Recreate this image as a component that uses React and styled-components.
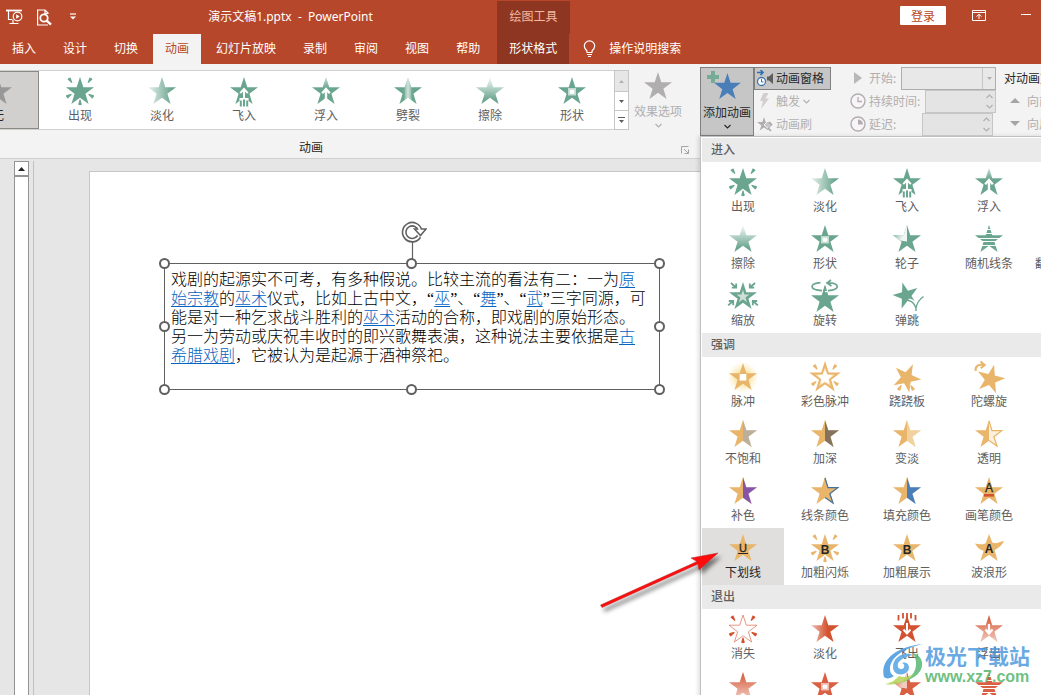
import React from "react";
import styled, { createGlobalStyle, css } from "styled-components";

const GlobalStyle = createGlobalStyle`
  * {
    box-sizing: border-box;
  }

  body {
    margin: 0;
    font-family: "Noto Sans CJK SC", sans-serif;
    font-size: 12px;
    line-height: 16px;
    color: #262626;
  }

  button, input, select {
    font: inherit;
    color: inherit;
    margin: 0;
  }
`;

const Page = styled.div`
  position: relative;
  display: flex;
  flex-direction: column;
  height: 100vh;
  overflow: hidden;
  background: #e6e6e6;
`;

// Title bar
const Header = styled.header`
  background: #b7472a;
  color: #ffffff;
`;

const TitleBar = styled.div`
  display: flex;
  height: 34px;
`;

const TitleLeft = styled.div`
  flex: 0 0 497px;
  display: flex;
  align-items: center;
`;

const QuickAccess = styled.div`
  display: flex;
  align-items: center;
  gap: 14px;
  padding-left: 6px;
`;

const IconButton = styled.button`
  display: flex;
  padding: 0;
  border: none;
  background: none;
`;

const Title = styled.div`
  flex: 1;
  padding-right: 12px;
  text-align: center;
  white-space: pre;
  font-family: "Noto Sans", "Noto Sans CJK SC", sans-serif;
`;

const ContextLabel = styled.div`
  width: 73px;
  margin-top: 1px;
  padding-top: 7px;
  text-align: center;
  background: #8e3621;
  color: #f5b8a2;
`;

const WindowControls = styled.div`
  display: flex;
  align-items: flex-start;
  gap: 26px;
  margin-left: auto;
  padding: 6px 10px 0 0;
`;

const SignIn = styled.button`
  width: 46px;
  height: 19px;
  padding: 0;
  border: none;
  border-radius: 1px;
  background: #ffffff;
  color: #b7472a;
  line-height: 19px;
`;

const WindowButtons = styled.div`
  display: flex;
  gap: 35px;
  padding-top: 4px;
`;

const Tabs = styled.nav`
  display: flex;
  gap: 3px;
  height: 30px;
`;

const Tab = styled.button`
  padding: 0 12px 2px;
  border: none;
  background: ${({ $active, $context }) => ($active ? "#f3f3f3" : $context ? "#8e3621" : "none")};
  color: ${({ $active }) => ($active ? "#b7472a" : "#ffffff")};
  margin-left: ${({ $context }) => ($context ? "2px" : "0")};
`;

const TellMe = styled.button`
  display: flex;
  align-items: center;
  gap: 11px;
  margin-left: 9px;
  padding: 0 0 2px;
  border: none;
  background: none;
`;

// Ribbon
const Ribbon = styled.div`
  position: relative;
  z-index: 2;
  display: flex;
  height: 95px;
  flex-shrink: 0;
  background: #f3f3f3;
  border-bottom: 1px solid #d0d0d0;
`;

const AnimationGroup = styled.section`
  flex: 0 0 692px;
  display: flex;
  flex-direction: column;
  padding-top: 6px;
`;

const GroupRow = styled.div`
  display: flex;
`;

const Gallery = styled.div`
  flex: 0 0 614px;
  display: flex;
  justify-content: flex-end;
  overflow: hidden;
  height: 60px;
  padding-right: 1px;
  border: solid #d0d0d0;
  border-width: 1px 0;
  background: #ffffff;
`;

const GalleryScroll = styled.div`
  width: 15px;
  display: grid;
  grid-template-rows: 22px 19px 19px;
`;

const ScrollStep = styled.button`
  display: flex;
  align-items: center;
  justify-content: center;
  padding: 0;
  border: 1px solid #c6c6c6;
  background: ${({ disabled }) => (disabled ? "#e6e6e6" : "#ffffff")};

  & + & {
    border-top: none;
  }
`;

const Effect = styled.button`
  flex: 0 0 82px;
  height: ${({ $inMenu }) => ($inMenu ? "57px" : "58px")};
  display: flex;
  flex-direction: column;
  align-items: center;
  gap: 2px;
  padding: 6px 0 0;
  border: none;
  background: none;
  color: #5e5e5e;
  white-space: nowrap;

  ${({ $selected }) => $selected && css`
    background: #d2d0ce;
    box-shadow: inset 0 0 0 1px #8a8a85;
    color: #262626;
  `}

  ${({ $hot }) => $hot && css`
    background: #e1dfdd;
    color: #262626;
  `}
`;

const EffectIcon = styled.svg`
  width: 28px;
  height: 28px;
  flex-shrink: 0;
  overflow: visible;
`;

const EffectOptions = styled.button`
  display: flex;
  flex-direction: column;
  align-items: center;
  padding: 2px 0 0 5px;
  border: none;
  background: none;
  color: #b1aeb0;
  white-space: nowrap;
`;

const ButtonText = styled.span`
  margin: 3px 0 4px;
`;

const GroupCaption = styled.div`
  display: flex;
  align-items: flex-end;
  height: 25px;
  padding-right: 3px;
`;

const CaptionText = styled.div`
  flex: 1;
  padding-left: 8px;
  margin-right: 67px;
  text-align: center;
`;

const Divider = styled.div`
  width: 1px;
  height: ${({ $short }) => ($short ? "56px" : "86px")};
  margin-top: ${({ $short }) => ($short ? "10px" : "4px")};
  background: ${({ $short }) => ($short ? "#d0d0d0" : "#b1b1b1")};
`;

const AdvancedGroup = styled.section`
  display: flex;
  align-items: flex-start;
  padding: 3px 7px 0 8px;
`;

const MenuAnchor = styled.div`
  position: relative;
`;

const AddAnimation = styled.button`
  width: 54px;
  height: 69px;
  display: flex;
  flex-direction: column;
  align-items: center;
  padding: 5px 0 0;
  border: 1px solid #808080;
  background: #c6c6c6;
  white-space: nowrap;
`;

const ToolColumn = styled.div`
  width: 77px;
  display: grid;
  grid-auto-rows: 23px;
`;

const ToolButton = styled.button`
  display: flex;
  align-items: center;
  gap: 3px;
  padding: 0 2px 1px;
  border: 1px solid ${({ $pressed }) => ($pressed ? "#808080" : "transparent")};
  background: ${({ $pressed }) => ($pressed ? "#c6c6c6" : "none")};
  color: ${({ $pressed }) => ($pressed ? "#262626" : "#b1b1b1")};
  white-space: nowrap;
`;

const TimingGroup = styled.section`
  display: grid;
  grid-auto-rows: 23px;
  padding: 3px 4px 0 12px;
`;

const TimingRow = styled.div`
  display: flex;
  align-items: center;
  color: #b1aeb0;
`;

const TimingLabel = styled.label`
  display: flex;
  align-items: center;
  gap: 3px;
  width: ${({ $width }) => $width};
  padding-bottom: 2px;
  white-space: nowrap;
`;

const Field = styled.div`
  position: relative;
  width: ${({ $wide }) => ($wide ? "95px" : "71px")};
  height: 23px;
`;

const fieldStyle = css`
  width: 100%;
  height: 100%;
  padding: 0 4px;
  border-radius: 0;
  background: #e4e4e4;
`;

const StartSelect = styled.select`
  ${fieldStyle}
  appearance: none;
  border: 1px solid #919191;
`;

const TimeInput = styled.input`
  ${fieldStyle}
  border: 1px solid #c6c6c6;
`;

const FieldMarks = styled.span`
  position: absolute;
  inset: 1px 1px 1px auto;
  width: 13px;
  display: flex;
  flex-direction: column;
  align-items: center;
  justify-content: center;
  gap: 5px;
  border-left: 1px solid ${({ $line }) => ($line ? "#c6c6c6" : "transparent")};
  pointer-events: none;
`;

const ReorderGroup = styled.section`
  display: grid;
  grid-auto-rows: 23px;
  padding: 2px 0 0 4px;
  line-height: 23px;
  white-space: nowrap;
`;

const MoveButton = styled.button`
  display: flex;
  align-items: center;
  gap: 7px;
  padding: 0 0 0 6px;
  border: none;
  background: none;
  color: #b1aeb0;
`;

// Add animation menu
const Menu = styled.div`
  position: absolute;
  top: 100%;
  left: 0;
  padding: 1px 0 0 1px;
  border: solid #c0c0c0;
  border-width: 1px 0 0 1px;
  background: #ffffff;
  box-shadow: -2px 0 4px rgba(0, 0, 0, 0.12);
`;

const MenuHeading = styled.h3`
  margin: 0;
  padding: 3px 9px 5px;
  background: #eaeaea;
  color: #5e5e5e;
  font-size: 12px;
  line-height: 16px;
  font-weight: 500;
`;

const MenuRow = styled.div`
  display: flex;
  min-width: 410px;
`;

// Work area
const Workspace = styled.main`
  flex: 1;
  display: flex;
  min-height: 0;
  padding-top: 2px;
`;

const OutlineScroll = styled.div`
  width: 15px;
  margin-left: 14px;
  display: flex;
  flex-direction: column;
  border: 1px solid #939393;
  border-bottom: none;
  background: #ffffff;
`;

const ScrollUp = styled.button`
  height: 15px;
  display: flex;
  align-items: center;
  justify-content: center;
  padding: 0;
  border: none;
  border-bottom: 2px solid #939393;
  background: none;
`;

const PaneEdge = styled.div`
  width: 1px;
  margin-left: 4px;
  background: #c0c0c0;
`;

const Slide = styled.article`
  position: relative;
  flex: 1;
  margin: 10px 0 0 55px;
  border: solid #c6c6c6;
  border-width: 1px 0 0 1px;
  background: #ffffff;
`;

const TextBox = styled.div`
  position: absolute;
  top: 91px;
  left: 74px;
  width: 496px;
  height: 127px;
  padding: 6px 0 0 6px;
  border: 1px solid #606060;
  color: #000000;
  font-family: "Liberation Serif", "Noto Sans CJK SC", sans-serif;
  font-size: 16px;
  line-height: 19px;
  font-weight: 300;
`;

const Paragraph = styled.p`
  margin: 0;
  white-space: nowrap;

  a {
    color: #0563c1;
    text-underline-offset: 2px;
  }
`;

const Handle = styled.span`
  position: absolute;
  left: ${({ $x }) => $x};
  top: ${({ $y }) => $y};
  width: 11px;
  height: 11px;
  margin: -6px 0 0 -6px;
  border: 2px solid #606060;
  border-radius: 50%;
  background: #ffffff;
`;

const RotateHandle = styled.svg`
  position: absolute;
  left: 50%;
  bottom: 100%;
  width: 28px;
  height: 44px;
  margin-left: -13px;
`;

const PointerArrow = styled.svg`
  position: absolute;
  left: 595px;
  top: 540px;
  width: 130px;
  height: 80px;
  z-index: 4;
  pointer-events: none;
`;

const Watermark = styled.div`
  position: absolute;
  right: 11px;
  bottom: 8px;
  z-index: 5;
  display: flex;
  align-items: center;
  gap: 1px;
  pointer-events: none;
`;

const WatermarkText = styled.div`
  font-size: 21px;
  line-height: 24px;
  font-weight: 700;
  color: rgba(66, 146, 220, 0.8);
  white-space: nowrap;
`;

const WatermarkUrl = styled.div`
  font-family: "Liberation Sans", sans-serif;
  font-size: 16px;
  line-height: 20px;
  font-weight: 700;
  color: rgba(92, 184, 112, 0.9);
`;

const STAR = "M14 0l3.3 10.2H28l-8.6 6.6L22.6 27 14 20.8 5.4 27l3.2-10.2L0 10.2h10.7z";
const HALF = "M14 0l3.3 10.2H28l-8.6 6.6L22.6 27 14 20.8z";

const GREEN = "#6aa58f";
const GOLD = "#e8b56a";
const RED = "#d35230";

const Gradient = ({ id, color, x2 = 0, y2 = 0, from = 0.2, to = 1 }) => (
  <linearGradient id={id} x1="0" y1="0" x2={x2} y2={y2}>
    <stop offset="0.05" stopColor={color} stopOpacity={from} />
    <stop offset="0.85" stopColor={color} stopOpacity={to} />
  </linearGradient>
);

const SharedDefs = () => (
  <svg width="0" height="0" style={{ position: "absolute" }} aria-hidden="true">
    <defs>
      <Gradient id="fadeGreen" color={GREEN} x2={1} />
      <Gradient id="wipeGreen" color={GREEN} y2={1} from={0.1} />
      <Gradient id="floatGreen" color={GREEN} y2={0.5} from={0.4} />
      <Gradient id="wheelGreen" color={GREEN} x2={1} y2={0.4} from={1} to={0.1} />
      <Gradient id="fadeRed" color={RED} x2={0.7} from={0.4} />
      <Gradient id="floatRed" color={RED} y2={1} from={0.95} to={0.4} />
      <Gradient id="wheelRed" color={RED} x2={1} y2={0.4} from={1} to={0.3} />
      <linearGradient id="split">
        <stop offset="0.37" stopColor={GREEN} />
        <stop offset="0.38" stopColor="#8fbcab" />
        <stop offset="0.5" stopColor="#d0e3db" />
        <stop offset="0.62" stopColor="#8fbcab" />
        <stop offset="0.63" stopColor={GREEN} />
      </linearGradient>
      <radialGradient id="glow">
        <stop offset="0.3" stopColor="#f6d36b" stopOpacity="0.7" />
        <stop offset="1" stopColor="#f9e3a0" stopOpacity="0" />
      </radialGradient>
      <radialGradient id="goldCore">
        <stop offset="0.25" stopColor="#ffffff" />
        <stop offset="0.8" stopColor="#f3d08f" />
      </radialGradient>
    </defs>
  </svg>
);

// [x, y, rotation] of each drop placed round a star
const AROUND = [[4.5, 3.6, -35], [23.5, 3.6, 35], [3.2, 18.6, -120], [24.8, 18.6, 120], [14, 25, 180]];
const CORNERS = [[4.8, 4.4, -35], [23.2, 4.4, 35], [3.4, 20, -130], [24.6, 20, 130]];

const Drops = ({ color, at = AROUND, halo = "#ffffff" }) =>
  at.map(([x, y, r]) => (
    <path
      key={`${x}-${y}`}
      d="M-1.8-2.6C-1-3.4 1-3.4 1.8-2.6L.5 2.6h-1z"
      transform={`translate(${x} ${y}) rotate(${r})`}
      fill={color}
      stroke={halo}
      strokeWidth="1.2"
      paintOrder="stroke"
    />
  ));

const HalfStar = ({ right, stroke }) => (
  <>
    <path d={STAR} fill={GOLD} />
    <path d={HALF} fill="#ffffff" />
    <path d={HALF} fill={right} />
    {stroke && <path d="M14 1l3 9.7h9.8l-8 6.1L22 26l-8-5.6" fill="none" stroke={stroke} strokeWidth="1.2" />}
  </>
);

const Letter = ({ children, y = 20 }) => (
  <text x="14" y={y} textAnchor="middle" fontFamily="Liberation Sans" fontSize="12" fontWeight="700" fill="#262626">
    {children}
  </text>
);

const ShapeStar = ({ color, light }) => (
  <>
    <path d={STAR} fill={color} />
    <path d="M10 11h8v7.5h-8z" fill={light} />
    <path d="M11.7 12.7h4.6v4h-4.6z" fill="#ffffff" />
  </>
);

const Bars = ({ color }) => (
  <>
    <path d={STAR} fill={color} />
    <path d="M0 4.5h28M0 8.5h28M0 13.5h28M0 16.5h28M0 20.5h28" stroke="#ffffff" strokeWidth="1.1" />
  </>
);

const glyphs = {
  none: <path d={STAR} fill="#989898" />,
  options: <path d={STAR} fill="#b1aeb0" />,
  appear: <><path d={STAR} fill={GREEN} /><Drops color={GREEN} /></>,
  fade: <path d={STAR} fill="url(#fadeGreen)" />,
  flyIn: (
    <>
      <path d={STAR} fill={GREEN} />
      <path d="M9.5 21h9v8h-9z" fill="#ffffff" />
      <path d="M14 12.5V23M10.2 16.2L14 12l3.8 4.2" fill="none" stroke="#ffffff" strokeWidth="2" />
      <path d="M10.8 23.5V29.5M14 22.5V29.5M17.2 23.5V29.5" stroke={GREEN} strokeWidth="2" />
    </>
  ),
  floatIn: (
    <>
      <path d={STAR} fill="url(#floatGreen)" />
      <path d="M14 12.5V22M10.2 16.2L14 12l3.8 4.2" fill="none" stroke="#ffffff" strokeWidth="2.4" />
    </>
  ),
  split: <path d={STAR} fill="url(#split)" />,
  wipe: <path d={STAR} fill="url(#wipeGreen)" />,
  shape: <ShapeStar color={GREEN} light="#c3dbd2" />,
  wheel: (
    <>
      <path d={STAR} fill={GREEN} />
      <path d="M14 0L10.7 10.2H0l7 5.4L14 16.5z" fill="#ffffff" />
      <path d="M14 0L10.7 10.2H0l7 5.4L14 16.5z" fill="url(#wheelGreen)" />
    </>
  ),
  bars: <Bars color={GREEN} />,
  zoom: (
    <>
      <path d={STAR} fill={GREEN} />
      <path d={STAR} fill="#d0dfd9" transform="translate(7.5 7.8) scale(.46)" />
      <g fill="none" stroke={GREEN} strokeWidth="1.8">
        <path d="M2 1l5 4.5M7.2 1.5v4.2H2.8M26 1l-5 4.5M20.8 1.5v4.2h4.4" />
        <path d="M-.8 23.4L4 19M-.2 19h4.4v4.2M28.8 23.4L24 19M28.2 19h-4.4v4.2" />
      </g>
    </>
  ),
  spin: (
    <>
      <path d={STAR} fill={GREEN} transform="translate(0 3)" />
      <path d="M6.5 8.5C-1 6.5 0 1.5 9.5.8M17.5.8C30 1.5 29 8.7 14 8.7" fill="none" stroke="#ffffff" strokeWidth="3" />
      <path d="M14 3l2 6h-4z" fill={GREEN} />
      <path d="M11 8.6C-2 8-2 1.3 9.5.7M16 1C30 0 29 8.8 17 8.6M20-2l-4 3 4.5 3" fill="none" stroke={GREEN} strokeWidth="1.7" />
    </>
  ),
  bounce: (
    <>
      <path d={STAR} fill={GREEN} transform="translate(-3 4) rotate(-16) scale(.92)" />
      <path d="M15.5 18.5q6 .5 7.5 7 1.5-6.5 7.5-11" fill="none" stroke="#ffffff" strokeWidth="4" />
      <path d="M15 18.5q5.5.5 8 7.5 1.5-7.5 7.5-11.5M23 24v5" fill="none" stroke={GREEN} strokeWidth="1.4" />
    </>
  ),
  pulse: (
    <>
      <circle cx="14" cy="14.5" r="16" fill="url(#glow)" />
      <path d={STAR} fill={GOLD} />
      <path d="M10.7 11h6.6v6.6h-6.6z" fill="#ffffff" />
    </>
  ),
  colorPulse: (
    <>
      <path d={STAR} fill="url(#goldCore)" stroke={GOLD} strokeWidth="2" transform="translate(1 1) scale(.93)" />
      <path d={STAR} fill="#ffffff" transform="translate(7 7.4) scale(.5)" />
      <Drops color={GOLD} at={CORNERS} />
    </>
  ),
  teeter: (
    <>
      <path d={STAR} fill={GOLD} transform="rotate(25 14 14)" />
      <Drops color={GOLD} at={[[7, 24.5, -150], [19, 24.5, 150]]} />
    </>
  ),
  spinGold: (
    <>
      <path d={STAR} fill={GOLD} transform="rotate(14 14 14) translate(2 1)" />
      <path d="M.6 8C0 2.5 4 1 9 2M5.5-1.5L9.7 2 5.7 5.2" fill="none" stroke={GOLD} strokeWidth="2" />
    </>
  ),
  desaturate: <HalfStar right="#bbae9b" />,
  darken: <HalfStar right="#84725a" />,
  lighten: <HalfStar right="#f1d29e" />,
  transparent: <HalfStar right="#fbefdd" stroke={GOLD} />,
  complement: <HalfStar right="#8755a8" />,
  lineColor: <HalfStar right={GOLD} stroke="#45729d" />,
  fillColor: <HalfStar right="#4a7eb8" />,
  brush: (
    <>
      <path d={STAR} fill={GOLD} />
      <text x="14" y="15" textAnchor="middle" fontFamily="Liberation Sans" fontSize="12" fill="#262626" stroke="#262626" strokeWidth=".3">A</text>
      <path d="M9 17h10v2.6H9z" fill={RED} />
    </>
  ),
  underline: (
    <>
      <path d={STAR} fill={GOLD} />
      <text x="14" y="18" textAnchor="middle" fontFamily="Liberation Sans" fontSize="11" fill="#262626" stroke="#262626" strokeWidth=".3">U</text>
      <path d="M9 19.5h10" stroke="#262626" strokeWidth="1" />
    </>
  ),
  boldFlash: <><path d={STAR} fill={GOLD} /><Drops color={GOLD} /><Letter>B</Letter></>,
  bold: <><path d={STAR} fill={GOLD} /><Letter>B</Letter></>,
  wave: (
    <>
      <path d="M14 0l3.3 8.5c4 2 7-.8 11.7-1.5-1.5 4-5.5 7-9.4 9L22.6 27 14 20.8 5.4 27l3.2-10.2C4.5 16 2 13 0 9.5c4 .8 7 1.5 10.7-.3z" fill={GOLD} />
      <Letter y={19}>A</Letter>
    </>
  ),
  disappear: (
    <>
      <path d={STAR} fill="#ffffff" stroke="#dd7c63" strokeWidth=".8" />
      <Drops color={RED} />
    </>
  ),
  fadeOut: <path d={STAR} fill="url(#fadeRed)" />,
  flyOut: (
    <>
      <path d={STAR} fill={RED} />
      <path d="M9.5-2h2.500v6H9.500zM16-2h2.500v6H16z" fill="#ffffff" />
      <path d="M14-2V6M10-2V3.5M18-2V3.5M5.5 0V5.500M22.500 0V5.500" stroke={RED} strokeWidth="1.8" />
      <path d="M14 8v10M10.5 14.5L14 18.5l3.5-4" fill="none" stroke="#ffffff" strokeWidth="2" />
    </>
  ),
  floatOut: (
    <>
      <path d={STAR} fill="url(#floatRed)" />
      <path d="M14 9v9.5M10.5 14.5L14 18.5l3.5-4" fill="none" stroke="#ffffff" strokeWidth="2.2" />
    </>
  ),
  wipeOut: <path d={STAR} fill="url(#floatRed)" />,
  shapeOut: <ShapeStar color="#d96043" light="#f0b9aa" />,
  wheelOut: (
    <>
      <path d={STAR} fill="#d96043" />
      <path d="M14 0L10.7 10.2H0l7 5.4L14 16.5z" fill="#ffffff" />
      <path d="M14 0L10.7 10.2H0l7 5.4L14 16.5z" fill="url(#wheelRed)" />
    </>
  ),
  barsOut: <Bars color="#d96043" />,
};

const EffectItem = ({ kind, label, ...rest }) => (
  <Effect type="button" {...rest}>
    <EffectIcon viewBox="0 0 28 28" aria-hidden="true">{glyphs[kind]}</EffectIcon>
    <span>{label}</span>
  </Effect>
);

const Chevron = ({ up, color = "currentColor" }) => (
  <svg width="7" height="5" viewBox="0 0 7 5">
    <path d={up ? "M.5 4L3.5 1l3 3" : "M.5 1l3 3 3-3"} fill="none" stroke={color} strokeWidth="1.1" />
  </svg>
);

const Caret = ({ up, color = "#5e5e5e", size = 5 }) => (
  <svg width={size} height={size === 5 ? 3 : 5} viewBox="0 0 10 6" preserveAspectRatio="none">
    <path d={up ? "M0 6l5-6 5 6z" : "M0 0h10L5 6z"} fill={color} />
  </svg>
);

const Clock = ({ pie }) => (
  <svg width="16" height="16" viewBox="0 0 16 16">
    <circle cx="8" cy="8" r="7" fill="#f8f4f7" stroke="#b1aeb0" strokeWidth="1.4" />
    {pie ? <path d="M8 3.5V8.5h5A5 5 0 0 0 8 3.5z" fill="#b1aeb0" /> : <path d="M8 4v4.5h4" fill="none" stroke="#b1aeb0" strokeWidth="1.3" />}
  </svg>
);

const tabs = ["插入", "设计", "切换", "动画", "幻灯片放映", "录制", "审阅", "视图", "帮助"];

const gallery = [
  ["none", "无"],
  ["appear", "出现"],
  ["fade", "淡化"],
  ["flyIn", "飞入"],
  ["floatIn", "浮入"],
  ["split", "劈裂"],
  ["wipe", "擦除"],
  ["shape", "形状"],
];

const sections = [
  {
    name: "进入",
    rows: [
      [["appear", "出现"], ["fade", "淡化"], ["flyIn", "飞入"], ["floatIn", "浮入"]],
      [["wipe", "擦除"], ["shape", "形状"], ["wheel", "轮子"], ["bars", "随机线条"], ["fade", "翻转式由远…"]],
      [["zoom", "缩放"], ["spin", "旋转"], ["bounce", "弹跳"]],
    ],
  },
  {
    name: "强调",
    rows: [
      [["pulse", "脉冲"], ["colorPulse", "彩色脉冲"], ["teeter", "跷跷板"], ["spinGold", "陀螺旋"]],
      [["desaturate", "不饱和"], ["darken", "加深"], ["lighten", "变淡"], ["transparent", "透明"]],
      [["complement", "补色"], ["lineColor", "线条颜色"], ["fillColor", "填充颜色"], ["brush", "画笔颜色"]],
      [["underline", "下划线"], ["boldFlash", "加粗闪烁"], ["bold", "加粗展示"], ["wave", "波浪形"]],
    ],
  },
  {
    name: "退出",
    rows: [
      [["disappear", "消失"], ["fadeOut", "淡化"], ["flyOut", "飞出"], ["floatOut", "浮出"]],
      [["wipeOut", "擦除"], ["shapeOut", "形状"], ["wheelOut", "轮子"], ["barsOut", "随机线条"]],
    ],
  },
];

const FAR = "calc(100% + 1px)";

const handles = [
  ["0%", "0%"], ["50%", "0%"], [FAR, "0%"],
  ["0%", "50%"], [FAR, "50%"],
  ["0%", FAR], ["50%", FAR], [FAR, FAR],
];

const AppHeader = () => (
  <Header>
    <TitleBar>
      <TitleLeft>
        <QuickAccess>
          <IconButton aria-label="从头开始">
            <svg width="17" height="16" viewBox="0 0 17 16" fill="none" stroke="#fff" strokeWidth="1.2">
              <path d="M0 1.5h16" strokeWidth="1.8" />
              <path d="M2.5 2v8.5h4M7 11v3.5M3.5 14.5h9" />
              <circle cx="11.5" cy="7.5" r="4.3" fill="#b7472a" />
              <path d="M10.2 5.2v4.6l3.5-2.3z" fill="#fff" stroke="none" />
            </svg>
          </IconButton>
          <IconButton aria-label="打印预览">
            <svg width="15" height="17" viewBox="0 0 15 17" fill="none" stroke="#fff" strokeWidth="1.2">
              <path d="M11 5V4L8 1H.6v15H11M8 1v3.5h3" />
              <circle cx="7" cy="9" r="3.7" strokeWidth="1.8" fill="#b7472a" />
              <path d="M9.7 11.7l4.3 4" strokeWidth="2.4" />
            </svg>
          </IconButton>
          <IconButton aria-label="自定义快速访问工具栏">
            <svg width="30" height="8" viewBox="0 0 30 8">
              <path d="M4 1h6" stroke="#fff" strokeWidth="1.2" />
              <path d="M4 3.5h6l-3 3z" fill="#fff" />
            </svg>
          </IconButton>
        </QuickAccess>
        <Title>演示文稿1.pptx  -  PowerPoint</Title>
      </TitleLeft>
      <ContextLabel>绘图工具</ContextLabel>
      <WindowControls>
        <SignIn>登录</SignIn>
        <WindowButtons>
          <IconButton aria-label="功能区显示选项">
            <svg width="14" height="11" viewBox="0 0 14 11" fill="none" stroke="#fff">
              <path d="M.5.5h13v10H.5zM.5 2.5h13M7 9V4.5M4.5 6.5L7 4.3l2.5 2.2" />
            </svg>
          </IconButton>
          <IconButton aria-label="最小化">
            <svg width="10" height="10" viewBox="0 0 10 10"><path d="M0 4.5h10" stroke="#fff" /></svg>
          </IconButton>
        </WindowButtons>
      </WindowControls>
    </TitleBar>
    <Tabs>
      {tabs.map((name) => (
        <Tab key={name} $active={name === "动画"}>{name}</Tab>
      ))}
      <Tab $context>形状格式</Tab>
      <TellMe>
        <svg width="17" height="17" viewBox="0 0 17 17" fill="none" stroke="#fff" strokeWidth="1.2">
          <path d="M6 12.5V11C4.5 9.5 3.3 8.2 3.3 6a5.2 5.2 0 0 1 10.4 0c0 2.2-1.2 3.5-2.7 5v1.5zM6 14.5h5M7 16.5h3" />
        </svg>
        操作说明搜索
      </TellMe>
    </Tabs>
  </Header>
);

const AnimationMenu = () => (
  <Menu>
    {sections.map(({ name, rows }) => (
      <React.Fragment key={name}>
        <MenuHeading>{name}</MenuHeading>
        {rows.map((row) => (
          <MenuRow key={row[0][0]}>
            {row.map(([kind, label]) => (
              <EffectItem key={label} kind={kind} label={label} $inMenu $hot={kind === "underline"} />
            ))}
          </MenuRow>
        ))}
      </React.Fragment>
    ))}
  </Menu>
);

const AnimationRibbon = () => (
  <Ribbon>
    <AnimationGroup>
      <GroupRow>
        <Gallery>
          {gallery.map(([kind, label]) => (
            <EffectItem key={kind} kind={kind} label={label} $selected={kind === "none"} />
          ))}
        </Gallery>
        <GalleryScroll>
          <ScrollStep disabled aria-label="向上"><Caret up color="#b1b1b1" /></ScrollStep>
          <ScrollStep aria-label="向下"><Caret /></ScrollStep>
          <ScrollStep aria-label="其他">
            <svg width="7" height="7" viewBox="0 0 7 7">
              <path d="M0 .5h7" stroke="#5e5e5e" />
              <path d="M1 3h5L3.5 6z" fill="#5e5e5e" />
            </svg>
          </ScrollStep>
        </GalleryScroll>
        <EffectOptions disabled>
          <EffectIcon viewBox="0 0 28 28">{glyphs.options}</EffectIcon>
          <ButtonText>效果选项</ButtonText>
          <Chevron />
        </EffectOptions>
      </GroupRow>
      <GroupCaption>
        <CaptionText>动画</CaptionText>
        <IconButton aria-label="显示其他效果选项">
          <svg width="8" height="9" viewBox="0 0 8 9" fill="none" stroke="#a5a5a5">
            <path d="M.5 7.5v-7h7M3 3l4 4M7.5 3.5v4h-4" />
          </svg>
        </IconButton>
      </GroupCaption>
    </AnimationGroup>
    <Divider />
    <AdvancedGroup>
      <MenuAnchor>
        <AddAnimation aria-expanded="true">
          <EffectIcon viewBox="0 0 28 28">
            <path d={STAR} fill="#4a7eb8" transform="translate(1 0) scale(.96)" />
            <path d="M-2-2h4v4h4v4H2v4h-4V6h-4V2h4z" fill="#76ab98" />
          </EffectIcon>
          <ButtonText>添加动画</ButtonText>
          <Chevron />
        </AddAnimation>
        <AnimationMenu />
      </MenuAnchor>
      <ToolColumn>
        <ToolButton $pressed>
          <svg width="16" height="17" viewBox="0 0 16 17">
            <path d="M0 2.5h6M3.5 0L6 2.5 3.5 5" fill="none" stroke="#2f6fb0" strokeWidth="1.6" />
            <circle cx="4.5" cy="11.5" r="4" fill="#fff" stroke="#3b74ae" strokeWidth="1.3" />
            <path d="M4.5 9v3h2" fill="none" stroke="#3b74ae" />
            <path d="M16 3v11l-4-3.5h-2v-4h2z" fill="#5e5e5e" />
          </svg>
          动画窗格
        </ToolButton>
        <ToolButton disabled>
          <svg width="16" height="16" viewBox="0 0 16 16">
            <path d="M6.5 0h5L8.5 5.5H12L4 16l2-8H3z" fill="#d3cdd1" />
          </svg>
          触发
          <Chevron />
        </ToolButton>
        <ToolButton disabled>
          <svg width="16" height="16" viewBox="0 0 16 16">
            <path d={STAR} fill="#b1aeb0" transform="translate(0 1) scale(.5)" />
            <path d="M7 9l4-4 5 4-4 4z" fill="#c9c4c7" stroke="#f3f3f3" />
            <path d="M11 12l3 3M12 6l3 3" stroke="#a5a1a4" strokeWidth="1.5" />
          </svg>
          动画刷
        </ToolButton>
      </ToolColumn>
    </AdvancedGroup>
    <Divider />
    <TimingGroup>
      <TimingRow>
        <TimingLabel htmlFor="start" $width="51px">
          <svg width="16" height="12" viewBox="0 0 16 12"><path d="M4 0l8 6-8 6z" fill="#b8b8b8" /></svg>
          开始:
        </TimingLabel>
        <Field $wide>
          <StartSelect id="start" disabled />
          <FieldMarks $line><Caret color="#b1b1b1" /></FieldMarks>
        </Field>
      </TimingRow>
      <TimingRow>
        <TimingLabel htmlFor="duration" $width="75px"><Clock />持续时间:</TimingLabel>
        <Field>
          <TimeInput id="duration" disabled />
          <FieldMarks><Chevron up /><Chevron /></FieldMarks>
        </Field>
      </TimingRow>
      <TimingRow>
        <TimingLabel htmlFor="delay" $width="72px"><Clock pie />延迟:</TimingLabel>
        <Field>
          <TimeInput id="delay" disabled />
          <FieldMarks><Chevron up /><Chevron /></FieldMarks>
        </Field>
      </TimingRow>
    </TimingGroup>
    <Divider $short />
    <ReorderGroup>
      <div>对动画重新排序</div>
      <MoveButton disabled><Caret up color="#a5a5a5" size={10} />向前移动</MoveButton>
      <MoveButton disabled><Caret color="#a5a5a5" size={10} />向后移动</MoveButton>
    </ReorderGroup>
  </Ribbon>
);

const SlideEditor = () => (
  <Workspace>
    <OutlineScroll>
      <ScrollUp aria-label="向上滚动">
        <svg width="7" height="4" viewBox="0 0 7 4"><path d="M0 4l3.5-4L7 4z" fill="#262626" /></svg>
      </ScrollUp>
    </OutlineScroll>
    <PaneEdge />
    <Slide>
      <TextBox>
        <RotateHandle viewBox="0 0 28 44">
          <path d="M13.5 22v22" stroke="#606060" strokeWidth="1.2" />
          <path d="M21 14.500A8 8 0 1 1 20.500 8.500" fill="none" stroke="#606060" strokeWidth="5" transform="rotate(14 13 11.500)" />
          <path d="M15.500 9h11.500l-5.500 6.500z" fill="#fff" stroke="#606060" strokeWidth="1.5" />
          <path d="M21 14.500A8 8 0 1 1 20.500 8.500" fill="none" stroke="#fff" strokeWidth="1.8" transform="rotate(14 13 11.500)" />
        </RotateHandle>
        <Paragraph>
          戏剧的起源实不可考，有多种假说。比较主流的看法有二：一为<a href="#origin">原</a><br />
          <a href="#origin">始宗教</a>的<a href="#wushu">巫术</a>仪式，比如上古中文，“<a href="#wu">巫</a>”、“<a href="#dance">舞</a>”、“<a href="#martial">武</a>”三字同源，可<br />
          能是对一种乞求战斗胜利的<a href="#wushu">巫术</a>活动的合称，即戏剧的原始形态。<br />
          另一为劳动或庆祝丰收时的即兴歌舞表演，这种说法主要依据是<a href="#greek">古</a><br />
          <a href="#greek">希腊戏剧</a>，它被认为是起源于酒神祭祀。
        </Paragraph>
        {handles.map(([x, y]) => (
          <Handle key={x + y} $x={x} $y={y} />
        ))}
      </TextBox>
    </Slide>
  </Workspace>
);

const App = () => (
  <Page>
    <GlobalStyle />
    <SharedDefs />
    <AppHeader />
    <AnimationRibbon />
    <SlideEditor />
    <PointerArrow viewBox="0 0 130 80">
      <defs>
        <filter id="arrowShadow" x="-10%" y="-10%" width="130%" height="140%">
          <feDropShadow dx="3" dy="4" stdDeviation="2" floodOpacity="0.5" />
        </filter>
      </defs>
      <path d="M5.5 65L102 21.5 96 18l27-5-19 17-1-6L7 67.500z" fill="#ff0a0a" stroke="#a33" strokeWidth=".5" filter="url(#arrowShadow)" />
    </PointerArrow>
    <Watermark>
      <svg width="42" height="42" viewBox="0 0 42 42" opacity=".88">
        <path d="M2 33C-2 19 10 3 41 0 22 4 7 14 8 26c0 3 2 5 4 6-4 3-8 3-10 1z" fill="#4a9be0" />
        <path d="M31 9c13 4 11 18 1 24-9 6-18 7-26 6 14-1 24-5 27-13 2-6 1-12-2-17z" fill="#5cba78" />
        <path d="M3 40c7-1 10-4 14-8 5 2 11 1 15-3-5 9-18 13-29 11z" fill="#b4d45c" />
        <path d="M31 11c-9-4-20 2-20 12 0 8 10 10 15 4 3-5-1-10-6-8 3 1 3 5 0 6-5 1-6-6-1-9 3-3 8-4 12-5z" fill="#5aa7e6" />
      </svg>
      <div>
        <WatermarkText>极光下载站</WatermarkText>
        <WatermarkUrl>www.xz7.com</WatermarkUrl>
      </div>
    </Watermark>
  </Page>
);

export default App;
